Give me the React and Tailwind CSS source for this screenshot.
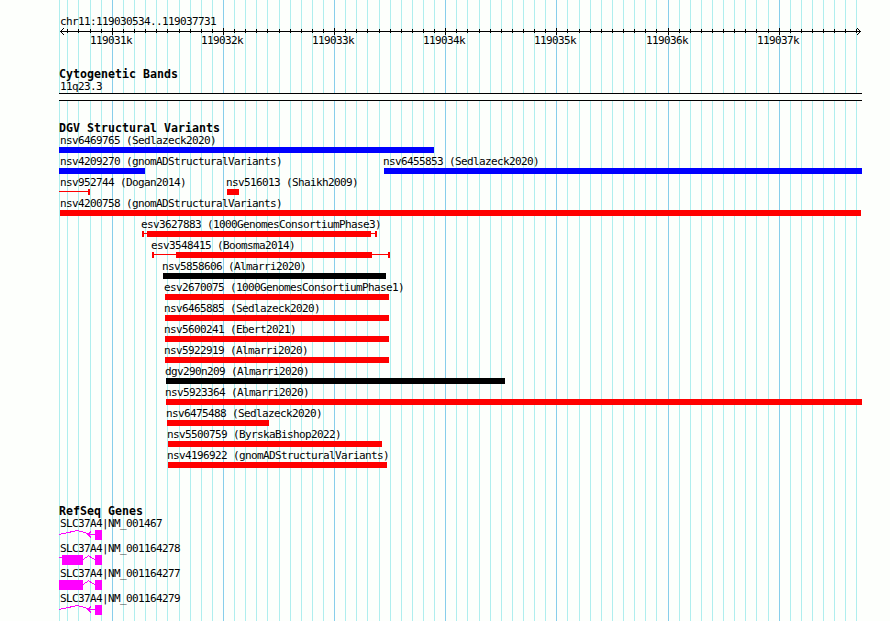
const SMALL = "font-['DejaVu_Sans_Mono','Liberation_Mono',monospace] text-[11px] tracking-[-0.623px] whitespace-pre text-black";
const BOLD = "font-['DejaVu_Sans_Mono','Liberation_Mono',monospace] font-bold text-[11.6px] leading-[13px] tracking-[0.02px] whitespace-pre text-black";

const MAJORS = [112, 223, 334, 445, 556, 668, 779];
const WIDE_AFTER = [78, 167, 267, 367, 467, 567, 656, 756];

// Minor divisions are 11px apart, with an occasional 12px step from rounding.
const LINES = [];
for (let x = 67; x < 860; x += WIDE_AFTER.includes(x) ? 12 : 11) LINES.push(x);

// Each row holds features: label, label x, bar start, bar end, colour, whisker range.
const ROWS = [
  [{ t: "nsv6469765 (Sedlazeck2020)", x: 60, a: 59, b: 434, c: "#0000ff" }],
  [
    { t: "nsv4209270 (gnomADStructuralVariants)", x: 60, a: 59, b: 145, c: "#0000ff" },
    { t: "nsv6455853 (Sedlazeck2020)", x: 383, a: 384, b: 862, c: "#0000ff" },
  ],
  [
    { t: "nsv952744 (Dogan2014)", x: 60, c: "#ff0000", w: [59, 90], openStart: true },
    { t: "nsv516013 (Shaikh2009)", x: 226, a: 227, b: 239, c: "#ff0000" },
  ],
  [{ t: "nsv4200758 (gnomADStructuralVariants)", x: 60, a: 60, b: 861, c: "#ff0000" }],
  [{ t: "esv3627883 (1000GenomesConsortiumPhase3)", x: 141, a: 147, b: 371, c: "#ff0000", w: [142, 377] }],
  [{ t: "esv3548415 (Boomsma2014)", x: 151, a: 176, b: 372, c: "#ff0000", w: [152, 390] }],
  [{ t: "nsv5858606 (Almarri2020)", x: 162, a: 163, b: 386, c: "#000000" }],
  [{ t: "esv2670075 (1000GenomesConsortiumPhase1)", x: 164, a: 165, b: 389, c: "#ff0000" }],
  [{ t: "nsv6465885 (Sedlazeck2020)", x: 164, a: 165, b: 389, c: "#ff0000" }],
  [{ t: "nsv5600241 (Ebert2021)", x: 164, a: 165, b: 389, c: "#ff0000" }],
  [{ t: "nsv5922919 (Almarri2020)", x: 164, a: 165, b: 389, c: "#ff0000" }],
  [{ t: "dgv290n209 (Almarri2020)", x: 165, a: 166, b: 505, c: "#000000" }],
  [{ t: "nsv5923364 (Almarri2020)", x: 165, a: 166, b: 862, c: "#ff0000" }],
  [{ t: "nsv6475488 (Sedlazeck2020)", x: 166, a: 167, b: 269, c: "#ff0000" }],
  [{ t: "nsv5500759 (ByrskaBishop2022)", x: 167, a: 168, b: 382, c: "#ff0000" }],
  [{ t: "nsv4196922 (gnomADStructuralVariants)", x: 167, a: 168, b: 387, c: "#ff0000" }],
];

const GENES = [
  { t: "SLC37A4|NM_001467", kind: "intron" },
  { t: "SLC37A4|NM_001164278", kind: "exon", start: 62 },
  { t: "SLC37A4|NM_001164277", kind: "exon", start: 59 },
  { t: "SLC37A4|NM_001164279", kind: "intron" },
];

function GridLines() {
  return (
    <svg className="absolute inset-0" width="890" height="621" shapeRendering="crispEdges">
      <rect x="59" y="0" width="1" height="621" fill="#afeeee" />
      {LINES.map((x) => (
        <rect key={x} x={x} y="0" width="1" height="621" fill={MAJORS.includes(x) ? "#87ceeb" : "#afeeee"} />
      ))}
    </svg>
  );
}

function Ruler() {
  return (
    <svg className="block" width="890" height="7" shapeRendering="crispEdges">
      <rect x="60" y="3" width="801" height="1" />
      {LINES.map((x) =>
        MAJORS.includes(x) ? (
          <rect key={x} x={x} y="0" width="1" height="7" />
        ) : (
          <rect key={x} x={x} y="1" width="1" height="4" />
        )
      )}
      {[1, 2, 3].map((d) => (
        <g key={d}>
          <rect x={60 + d} y={3 - d} width="1" height="1" />
          <rect x={60 + d} y={3 + d} width="1" height="1" />
          <rect x={860 - d} y={3 - d} width="1" height="1" />
          <rect x={860 - d} y={3 + d} width="1" height="1" />
        </g>
      ))}
    </svg>
  );
}

function Glyph({ f }) {
  return (
    <svg className="block" width="890" height="6" shapeRendering="crispEdges" fill={f.c}>
      {f.w && (
        <>
          <rect x={f.w[0]} y="2" width={f.w[1] - f.w[0]} height="1" />
          {!f.openStart && <rect x={f.w[0]} y="0" width="2" height="6" />}
          <rect x={f.w[1] - 2} y="0" width="2" height="6" />
        </>
      )}
      {f.a && <rect x={f.a} y="0" width={f.b - f.a} height="6" />}
    </svg>
  );
}

function Feature({ f }) {
  return (
    <div className="col-start-1 row-start-1 h-[21px]">
      <div className={`${SMALL} h-[15px] leading-[17px]`} style={{ paddingLeft: f.x }}>{f.t}</div>
      <Glyph f={f} />
    </div>
  );
}

function Gene({ g }) {
  return (
    <div className="h-[25px]">
      <div className={`${SMALL} h-[15px] leading-[17px] pl-[60px]`}>{g.t}</div>
      <svg className="block" width="110" height="10" shapeRendering="crispEdges" fill="none" stroke="#ff00ff">
        <rect x="95" y="0" width="7" height="10" fill="#ff00ff" stroke="none" />
        {g.kind === "intron" ? (
          <path d="M59 4.5 L77.5 .5 L89.5 4 M87 4.5 H95 M91 1.5 L88 4.5 L91 7.5" />
        ) : (
          <>
            <rect x={g.start} y="0" width={83 - g.start} height="10" fill="#ff00ff" stroke="none" />
            {g.start > 59 && <path d="M59 2.5 H62" />}
            <path d="M83 4.5 L88.5 .8 L95 4.5" />
          </>
        )}
      </svg>
    </div>
  );
}

export default function App() {
  return (
    <div className="relative h-[621px] w-[890px] overflow-hidden bg-[#fdfffc]">
      <GridLines />
      <div className="relative flex flex-col">
        <div className={`${SMALL} mt-[14px] h-[14px] pl-[60px] leading-[15px]`}>chr11:119030534..119037731</div>
        <Ruler />
        <div className="grid h-[13px]">
          {MAJORS.map((x, i) => (
            <div key={x} className={`${SMALL} col-start-1 row-start-1 -mt-[2px] leading-[15px]`} style={{ paddingLeft: x - 22 }}>
              {`11903${i + 1}k`}
            </div>
          ))}
        </div>
        <div className={`${BOLD} mt-5 h-[11px] pl-[59px]`}>Cytogenetic Bands</div>
        <div className={`${SMALL} h-[14px] pl-[60px] leading-[15px]`}>11q23.3</div>
        <div className="ml-[59px] h-2 w-[803px] border-y border-black bg-[#fdfffc]" />
        <div className={`${BOLD} mt-[21px] h-[10px] pl-[59px]`}>DGV Structural Variants</div>
        {ROWS.map((row, i) => (
          <div key={i} className="grid">
            {row.map((f) => (
              <Feature key={f.t} f={f} />
            ))}
          </div>
        ))}
        <div className={`${BOLD} mt-[37px] h-[10px] pl-[59px]`}>RefSeq Genes</div>
        {GENES.map((g) => (
          <Gene key={g.t} g={g} />
        ))}
      </div>
    </div>
  );
}
